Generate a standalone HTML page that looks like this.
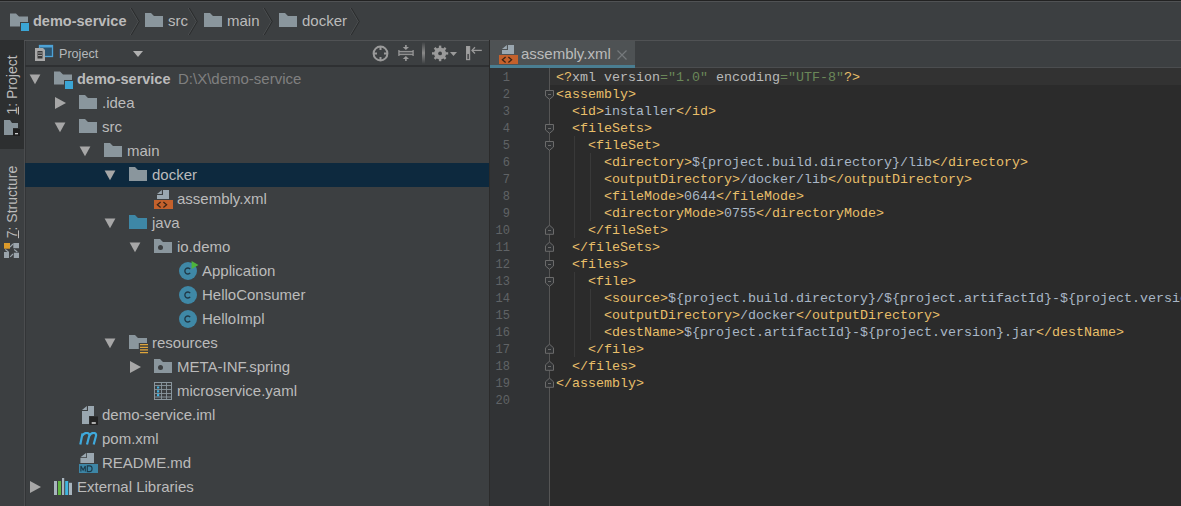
<!DOCTYPE html>
<html><head><meta charset="utf-8">
<style>
html,body{margin:0;padding:0;}
body{width:1181px;height:506px;overflow:hidden;position:relative;background:#3C3F41;font-family:"Liberation Sans",sans-serif;}
.abs{position:absolute;}
.t{position:absolute;height:24px;line-height:24px;font-size:15px;color:#BBBBBB;white-space:pre;}
.t.b{font-weight:bold;font-size:14.5px;}
.t.g{color:#808080;}
.cr{position:absolute;top:2px;height:38px;line-height:38px;font-size:15px;color:#BBBBBB;white-space:pre;}
#code{position:absolute;left:556px;top:69px;font-family:"Liberation Mono",monospace;font-size:13.333px;white-space:pre;}
.cl{height:17px;line-height:17px;}
#nums{position:absolute;left:480px;top:70px;width:30px;font-family:"Liberation Mono",monospace;font-size:12px;color:#606366;text-align:right;}
.nl{height:17px;line-height:17px;}
</style></head><body>
<!-- top line -->
<div class="abs" style="left:0;top:0;width:1181px;height:1px;background:#222222"></div><div class="abs" style="left:0;top:1px;width:1181px;height:1px;background:#505254"></div>
<!-- breadcrumb -->
<svg class="abs" style="left:10px;top:12px" width="20" height="20" viewBox="0 0 20 20"><path d="M0 1.5H6L9 4.5H18V10H10V14.6H0Z" fill="#8A969D"/><rect x="11" y="11" width="8" height="8" fill="#3BA6D6"/></svg>
<div class="cr" style="left:33px;font-weight:bold;font-size:14.5px">demo-service</div>
<svg style="position:absolute;left:130px;top:7px" width="11" height="29" viewBox="0 0 11 29"><path d="M0.3 1L8.3 14.5L0.3 28" stroke="#4C4F51" stroke-width="1" fill="none"/><path d="M1.3 1L9.3 14.5L1.3 28" stroke="#2A2C2D" stroke-width="1" fill="none"/></svg>
<svg class="abs" style="left:145px;top:13px" width="19" height="14" viewBox="0 0 19 14"><path d="M0 0H6L9 3H18V14H0Z" fill="#8A969D"/></svg>
<div class="cr" style="left:168px">src</div>
<svg style="position:absolute;left:188px;top:7px" width="11" height="29" viewBox="0 0 11 29"><path d="M0.3 1L8.3 14.5L0.3 28" stroke="#4C4F51" stroke-width="1" fill="none"/><path d="M1.3 1L9.3 14.5L1.3 28" stroke="#2A2C2D" stroke-width="1" fill="none"/></svg>
<svg class="abs" style="left:204px;top:13px" width="19" height="14" viewBox="0 0 19 14"><path d="M0 0H6L9 3H18V14H0Z" fill="#8A969D"/></svg>
<div class="cr" style="left:227px">main</div>
<svg style="position:absolute;left:263px;top:7px" width="11" height="29" viewBox="0 0 11 29"><path d="M0.3 1L8.3 14.5L0.3 28" stroke="#4C4F51" stroke-width="1" fill="none"/><path d="M1.3 1L9.3 14.5L1.3 28" stroke="#2A2C2D" stroke-width="1" fill="none"/></svg>
<svg class="abs" style="left:279px;top:13px" width="19" height="14" viewBox="0 0 19 14"><path d="M0 0H6L9 3H18V14H0Z" fill="#8A969D"/></svg>
<div class="cr" style="left:302px">docker</div>
<svg style="position:absolute;left:350px;top:7px" width="11" height="29" viewBox="0 0 11 29"><path d="M0.3 1L8.3 14.5L0.3 28" stroke="#4C4F51" stroke-width="1" fill="none"/><path d="M1.3 1L9.3 14.5L1.3 28" stroke="#2A2C2D" stroke-width="1" fill="none"/></svg>


<!-- left stripe -->
<div class="abs" style="left:0;top:40px;width:24px;height:466px;background:#3C3F41"></div>
<div class="abs" style="left:0;top:40px;width:24px;height:109px;background:#2D2F30"></div>
<div class="abs" style="left:24px;top:40px;width:1px;height:466px;background:#4B4D4F"></div><div class="abs" style="left:25px;top:40px;width:1px;height:466px;background:#333537"></div>
<div class="abs" style="left:-28px;top:77px;width:80px;height:16px;line-height:16px;font-size:14px;color:#BBBBBB;transform:rotate(-90deg);text-align:center;white-space:pre"><u>1</u>: Project</div>
<svg class="abs" style="left:4px;top:120px" width="17" height="16" viewBox="0 0 17 16"><path d="M0 0H6L8 3H14V8H9V15H0Z" fill="#87939A"/><rect x="9" y="9" width="7" height="7" fill="#1E1E1E"/><rect x="11" y="13" width="3" height="1.3" fill="#CCC"/></svg>
<div class="abs" style="left:-33px;top:194px;width:90px;height:16px;line-height:16px;font-size:14px;color:#BBBBBB;transform:rotate(-90deg);text-align:center;white-space:pre"><u>7</u>: Structure</div>
<svg class="abs" style="left:4px;top:243px" width="16" height="16" viewBox="0 0 16 16"><rect x="0" y="0" width="6" height="5.7" fill="#DB9A2A"/><rect x="9.3" y="0" width="5.7" height="5.2" fill="#9AA4AB"/><rect x="0" y="9" width="5" height="6" fill="#9AA4AB"/><rect x="9.8" y="9.7" width="5.2" height="5.3" fill="#9AA4AB"/><path d="M6 4L9 1M1.3 6.5L4.5 9M10.2 6.5L13.3 9M6.2 13.8L9 11" stroke="#9AA4AB" stroke-width="1.1"/></svg>

<!-- project panel header -->
<div class="abs" style="left:24px;top:40px;width:465px;height:1px;background:#505254"></div>
<div class="abs" style="left:25px;top:65px;width:464px;height:2px;background:#2E3032"></div>
<svg class="abs" style="left:34px;top:44px" width="20" height="18" viewBox="0 0 20 18"><rect x="5.5" y="1.5" width="13" height="11" fill="#2C5470" stroke="#4DA2D6" stroke-width="1.3"/><rect x="5" y="1" width="14" height="2.5" fill="#4DA2D6"/><path d="M1 4H9L11 6V17H1Z" fill="#A9A9A9"/><rect x="3.5" y="7" width="5" height="7.5" fill="#3A3A3A"/><path d="M4 9H8M4 11.5H8" stroke="#A9A9A9" stroke-width="0.9"/></svg>
<div class="abs" style="left:59px;top:45px;height:18px;line-height:18px;font-size:12.6px;color:#B4B8BB">Project</div>
<svg class="abs" style="left:133px;top:51px" width="10" height="6" viewBox="0 0 10 6"><path d="M0 0H10L5 6Z" fill="#B0B0B0"/></svg>
<svg class="abs" style="left:372px;top:45px" width="17" height="17" viewBox="0 0 17 17"><circle cx="8.5" cy="8.5" r="6.9" fill="none" stroke="#9A9A9A" stroke-width="2"/><path d="M8.5 1.5V5M8.5 12V15.5M1.5 8.5H5M12 8.5H15.5" stroke="#9A9A9A" stroke-width="2"/></svg>
<svg class="abs" style="left:398px;top:45px" width="16" height="17" viewBox="0 0 16 17"><rect x="1" y="6.4" width="14" height="2.8" fill="#5A5C5E"/><path d="M1 6.4H15M1 9.6H15" stroke="#9A9A9A" stroke-width="1"/><path d="M0.9 5V11M15.1 5V11" stroke="#9A9A9A" stroke-width="1.2"/><path d="M7.9 0V3M7.9 13V16" stroke="#9A9A9A" stroke-width="1.6"/><path d="M4.8 2L11 2L7.9 5Z M4.8 14L11 14L7.9 11Z" fill="#9A9A9A"/></svg>
<div class="abs" style="left:422px;top:42px;width:3px;height:22px;background:linear-gradient(#3C3F41,#8A8A8A 50%,#3C3F41)"></div>
<svg class="abs" style="left:432px;top:45px" width="17" height="17" viewBox="0 0 17 17"><g fill="#9A9A9A"><circle cx="8.1" cy="8.4" r="6"/><rect x="6.9" y="0.6" width="2.4" height="15.6"/><rect x="0" y="7.2" width="16.2" height="2.4"/><rect x="6.9" y="0.6" width="2.4" height="15.6" transform="rotate(45 8.1 8.4)"/><rect x="6.9" y="0.6" width="2.4" height="15.6" transform="rotate(-45 8.1 8.4)"/></g><circle cx="8.1" cy="8.4" r="1.9" fill="#3C3F41"/></svg>
<svg class="abs" style="left:450px;top:52px" width="7" height="4" viewBox="0 0 7 4"><path d="M0 0H7L3.5 4Z" fill="#9A9A9A"/></svg>
<svg class="abs" style="left:465px;top:45px" width="18" height="16" viewBox="0 0 18 16"><rect x="1" y="1" width="4.2" height="14.2" fill="#9A9A9A"/><rect x="2.7" y="1.5" width="0.6" height="7" fill="#B0B0B0"/><rect x="2.5" y="9" width="1.2" height="5" fill="#2E3032"/><path d="M7 5.4H16.8" stroke="#9A9A9A" stroke-width="1.3"/><path d="M10 2.3L7 5.4L10 8.5" stroke="#9A9A9A" stroke-width="1.3" fill="none"/></svg>

<!-- tree -->
<svg style="position:absolute;left:29px;top:74px" width="12" height="11" viewBox="0 0 12 11"><path d="M0.6 0.5H11.4L6 10.2Z" fill="#A7A7A7"/></svg>
<svg style="position:absolute;left:54px;top:70px" width="20" height="20" viewBox="0 0 20 20"><path d="M0 1.5H6L9 4.5H18V10H10V14.6H0Z" fill="#8A969D"/><rect x="11" y="11" width="8" height="8" fill="#3BA6D6"/></svg>
<div class="t b" style="left:77px;top:67px">demo-service</div>
<div class="t g" style="left:178px;top:67px">D:\X\demo-service</div>
<svg style="position:absolute;left:55px;top:97px" width="11" height="12" viewBox="0 0 11 12"><path d="M0 0L11 6L0 12Z" fill="#A7A7A7"/></svg>
<svg style="position:absolute;left:79px;top:94px" width="20" height="20" viewBox="0 0 20 20"><path d="M0 1H6L9 4H18V15H0Z" fill="#8A969D"/></svg>
<div class="t" style="left:102px;top:91px">.idea</div>
<svg style="position:absolute;left:54px;top:122px" width="12" height="11" viewBox="0 0 12 11"><path d="M0.6 0.5H11.4L6 10.2Z" fill="#A7A7A7"/></svg>
<svg style="position:absolute;left:79px;top:118px" width="20" height="20" viewBox="0 0 20 20"><path d="M0 1H6L9 4H18V15H0Z" fill="#8A969D"/></svg>
<div class="t" style="left:102px;top:115px">src</div>
<svg style="position:absolute;left:79px;top:146px" width="12" height="11" viewBox="0 0 12 11"><path d="M0.6 0.5H11.4L6 10.2Z" fill="#A7A7A7"/></svg>
<svg style="position:absolute;left:104px;top:142px" width="20" height="20" viewBox="0 0 20 20"><path d="M0 1H6L9 4H18V15H0Z" fill="#8A969D"/></svg>
<div class="t" style="left:127px;top:139px">main</div>
<div style="position:absolute;left:25px;top:163px;width:464px;height:24px;background:#0D293E"></div>
<svg style="position:absolute;left:104px;top:170px" width="12" height="11" viewBox="0 0 12 11"><path d="M0.6 0.5H11.4L6 10.2Z" fill="#A7A7A7"/></svg>
<svg style="position:absolute;left:129px;top:166px" width="20" height="20" viewBox="0 0 20 20"><path d="M0 1H6L9 4H18V15H0Z" fill="#8A969D"/></svg>
<div class="t" style="left:152px;top:163px">docker</div>
<svg style="position:absolute;left:154px;top:190px" width="20" height="20" viewBox="0 0 20 20"><path d="M9 0H15V9H3V5.1H9Z" fill="#9AA7B0"/><path d="M3 4.1L7.9 0V4.1Z" fill="#9AA7B0"/><rect x="0" y="10" width="19" height="9" fill="#C4612C"/><path d="M6.6 12L3.4 14.8L6.6 17.6M9.4 12L12.6 14.8L9.4 17.6" stroke="#3A2517" stroke-width="1.3" fill="none"/></svg>
<div class="t" style="left:177px;top:187px">assembly.xml</div>
<svg style="position:absolute;left:104px;top:218px" width="12" height="11" viewBox="0 0 12 11"><path d="M0.6 0.5H11.4L6 10.2Z" fill="#A7A7A7"/></svg>
<svg style="position:absolute;left:129px;top:214px" width="20" height="20" viewBox="0 0 20 20"><path d="M0 1H6L9 4H18V15H0Z" fill="#3E87A6"/></svg>
<div class="t" style="left:152px;top:211px">java</div>
<svg style="position:absolute;left:129px;top:242px" width="12" height="11" viewBox="0 0 12 11"><path d="M0.6 0.5H11.4L6 10.2Z" fill="#A7A7A7"/></svg>
<svg style="position:absolute;left:154px;top:238px" width="20" height="20" viewBox="0 0 20 20"><path d="M0 1H6L9 4H18V15H0Z" fill="#8A969D"/><circle cx="6.5" cy="9.4" r="2.5" fill="#3C3F41"/></svg>
<div class="t" style="left:177px;top:235px">io.demo</div>
<svg style="position:absolute;left:179px;top:261px" width="20" height="21" viewBox="0 0 20 21"><circle cx="9" cy="10" r="9" fill="#3F88A6"/><path d="M11.2 8.1A3 3 0 1 0 11.2 11.9" stroke="#203846" stroke-width="1.35" fill="none"/><path d="M12.6 0L19.5 4L12.6 8Z" fill="#4DB53C"/></svg>
<div class="t" style="left:202px;top:259px">Application</div>
<svg style="position:absolute;left:179px;top:285px" width="20" height="21" viewBox="0 0 20 21"><circle cx="9" cy="10" r="9" fill="#3F88A6"/><path d="M11.2 8.1A3 3 0 1 0 11.2 11.9" stroke="#203846" stroke-width="1.35" fill="none"/></svg>
<div class="t" style="left:202px;top:283px">HelloConsumer</div>
<svg style="position:absolute;left:179px;top:309px" width="20" height="21" viewBox="0 0 20 21"><circle cx="9" cy="10" r="9" fill="#3F88A6"/><path d="M11.2 8.1A3 3 0 1 0 11.2 11.9" stroke="#203846" stroke-width="1.35" fill="none"/></svg>
<div class="t" style="left:202px;top:307px">HelloImpl</div>
<svg style="position:absolute;left:104px;top:338px" width="12" height="11" viewBox="0 0 12 11"><path d="M0.6 0.5H11.4L6 10.2Z" fill="#A7A7A7"/></svg>
<svg style="position:absolute;left:129px;top:334px" width="20" height="20" viewBox="0 0 20 20"><path d="M0 1H6L9 4H18V9H9.8V15H0Z" fill="#8A969D"/><path d="M11 10.6H19M11 13.4H19M11 15.9H19M11 18.6H19" stroke="#DFA53A" stroke-width="1.4"/></svg>
<div class="t" style="left:152px;top:331px">resources</div>
<svg style="position:absolute;left:130px;top:361px" width="11" height="12" viewBox="0 0 11 12"><path d="M0 0L11 6L0 12Z" fill="#A7A7A7"/></svg>
<svg style="position:absolute;left:154px;top:358px" width="20" height="20" viewBox="0 0 20 20"><path d="M0 1H6L9 4H18V15H0Z" fill="#8A969D"/><circle cx="6.5" cy="9.4" r="2.5" fill="#3C3F41"/></svg>
<div class="t" style="left:177px;top:355px">META-INF.spring</div>
<svg style="position:absolute;left:154px;top:382px" width="20" height="20" viewBox="0 0 20 20"><rect x="0.5" y="0.5" width="17" height="17" fill="none" stroke="#8A969D"/><path d="M0.5 3.5H17.5M7.5 0.5V17.5M12.5 0.5V17.5M0.5 7.5H17.5M0.5 11.5H17.5M0.5 15H17.5" stroke="#8A969D" stroke-width="0.9"/><path d="M3 5.5H5.2M3 9.3H5.2M3 13.1H5.2" stroke="#3FB0E0" stroke-width="2.2"/></svg>
<div class="t" style="left:177px;top:379px">microservice.yaml</div>
<svg style="position:absolute;left:79px;top:406px" width="20" height="20" viewBox="0 0 20 20"><path d="M9 0H15V18H3V5.1H9Z" fill="#9AA7B0"/><path d="M3 4.1L7.9 0V4.1Z" fill="#9AA7B0"/><rect x="10" y="10" width="9.5" height="9.5" fill="#3C3F41"/><rect x="10.5" y="10.5" width="8.5" height="8.5" fill="#232323"/><rect x="12.7" y="16.2" width="4.1" height="1.6" fill="#D0D0D0"/></svg>
<div class="t" style="left:102px;top:403px">demo-service.iml</div>
<svg style="position:absolute;left:79px;top:432px" width="20" height="15" viewBox="0 0 20 15"><path d="M1.3 12.5L3.5 1.5M3.1 4C4.5 1.5 6 0.8 7.8 0.9C10 1.1 10.6 2.5 10.1 4.3L8 12.5M10.1 4.3C11.4 1.6 13 0.8 14.7 0.9C17 1.1 17.4 2.5 16.9 4.3L14.7 12.5" stroke="#3FA9DC" stroke-width="2.2" fill="none"/></svg>
<div class="t" style="left:102px;top:427px">pom.xml</div>
<svg style="position:absolute;left:79px;top:452px" width="20" height="22" viewBox="0 0 20 22"><path d="M7.8 1H15V11H1.4V6H7.8Z" fill="#9AA7B0"/><path d="M1.4 5.3L7 1V5.3Z" fill="#9AA7B0"/><rect x="0" y="12" width="19" height="9" fill="#3D86A6"/><path d="M1.9 19.6V13.9L4.1 18L6.3 13.9V19.6M8.3 13.9V19.6H10.6Q13.1 19.6 13.1 16.75Q13.1 13.9 10.6 13.9Z" stroke="#1C3A4A" stroke-width="1.1" fill="none"/></svg>
<div class="t" style="left:102px;top:451px">README.md</div>
<svg style="position:absolute;left:30px;top:481px" width="11" height="12" viewBox="0 0 11 12"><path d="M0 0L11 6L0 12Z" fill="#A7A7A7"/></svg>
<svg style="position:absolute;left:54px;top:478px" width="20" height="20" viewBox="0 0 20 20"><rect x="0" y="3" width="3" height="14" fill="#A9B5BE"/><rect x="4" y="3" width="3" height="14" fill="#62B543"/><rect x="8" y="0" width="2.2" height="17" fill="#A9B5BE"/><rect x="11.2" y="3" width="3" height="14" fill="#40B6E0"/><rect x="15" y="4.8" width="3" height="12.2" fill="#A9B5BE"/></svg>
<div class="t" style="left:77px;top:475px">External Libraries</div>

<!-- divider -->
<div class="abs" style="left:489px;top:40px;width:1px;height:466px;background:#2B2B2B"></div>

<!-- tabs -->
<div class="abs" style="left:490px;top:40px;width:691px;height:28px;background:#3C3F41"></div>
<div class="abs" style="left:490px;top:40px;width:691px;height:1px;background:#505254"></div>
<div class="abs" style="left:490px;top:41px;width:145px;height:24px;background:#4E5254"></div>
<div class="abs" style="left:490px;top:65px;width:145px;height:3px;background:#4A7E92"></div>
<div class="abs" style="left:635px;top:67px;width:546px;height:1px;background:#4B4D4F"></div>
<svg style="position:absolute;left:499px;top:45px" width="20" height="20" viewBox="0 0 20 20"><path d="M9 0H15V9H3V5.1H9Z" fill="#9AA7B0"/><path d="M3 4.1L7.9 0V4.1Z" fill="#9AA7B0"/><rect x="0" y="10" width="19" height="9" fill="#C4612C"/><path d="M6.6 12L3.4 14.8L6.6 17.6M9.4 12L12.6 14.8L9.4 17.6" stroke="#3A2517" stroke-width="1.3" fill="none"/></svg>
<div class="abs" style="left:521px;top:42px;height:24px;line-height:24px;font-size:15px;color:#BBBBBB">assembly.xml</div>
<svg class="abs" style="left:617px;top:50px" width="10" height="10" viewBox="0 0 10 10"><path d="M0.5 0.5L9.5 9.5M9.5 0.5L0.5 9.5" stroke="#75797C" stroke-width="1.2"/></svg>

<!-- editor -->
<div class="abs" style="left:490px;top:68px;width:60px;height:438px;background:#313335"></div>
<div class="abs" style="left:550px;top:68px;width:631px;height:438px;background:#2B2B2B"></div>
<div class="abs" style="left:550px;top:68px;width:631px;height:17px;background:#323232"></div>
<div class="abs" style="left:549px;top:68px;width:1px;height:438px;background:#555555"></div>
<!-- indent guides -->
<div class="abs" style="left:574px;top:136px;width:1px;height:102px;background:#393939"></div>
<div class="abs" style="left:590px;top:153px;width:1px;height:68px;background:#393939"></div>
<div class="abs" style="left:574px;top:272px;width:1px;height:85px;background:#393939"></div>
<div class="abs" style="left:590px;top:289px;width:1px;height:51px;background:#393939"></div>
<svg style="position:absolute;left:544px;top:89px" width="11" height="12" viewBox="0 0 11 12"><path d="M1.5 1.5H9.5V7L5.5 10.3L1.5 7Z" fill="#313335" stroke="#6B6B6B"/><path d="M4 5.5H7" stroke="#6B6B6B"/></svg>
<svg style="position:absolute;left:544px;top:123px" width="11" height="12" viewBox="0 0 11 12"><path d="M1.5 1.5H9.5V7L5.5 10.3L1.5 7Z" fill="#313335" stroke="#6B6B6B"/><path d="M4 5.5H7" stroke="#6B6B6B"/></svg>
<svg style="position:absolute;left:544px;top:140px" width="11" height="12" viewBox="0 0 11 12"><path d="M1.5 1.5H9.5V7L5.5 10.3L1.5 7Z" fill="#313335" stroke="#6B6B6B"/><path d="M4 5.5H7" stroke="#6B6B6B"/></svg>
<svg style="position:absolute;left:544px;top:259px" width="11" height="12" viewBox="0 0 11 12"><path d="M1.5 1.5H9.5V7L5.5 10.3L1.5 7Z" fill="#313335" stroke="#6B6B6B"/><path d="M4 5.5H7" stroke="#6B6B6B"/></svg>
<svg style="position:absolute;left:544px;top:276px" width="11" height="12" viewBox="0 0 11 12"><path d="M1.5 1.5H9.5V7L5.5 10.3L1.5 7Z" fill="#313335" stroke="#6B6B6B"/><path d="M4 5.5H7" stroke="#6B6B6B"/></svg>
<svg style="position:absolute;left:544px;top:224px" width="11" height="12" viewBox="0 0 11 12"><path d="M1.5 10.3H9.5V4.8L5.5 1.2L1.5 4.8Z" fill="#313335" stroke="#6B6B6B"/><path d="M4 6.5H7" stroke="#6B6B6B"/></svg>
<svg style="position:absolute;left:544px;top:241px" width="11" height="12" viewBox="0 0 11 12"><path d="M1.5 10.3H9.5V4.8L5.5 1.2L1.5 4.8Z" fill="#313335" stroke="#6B6B6B"/><path d="M4 6.5H7" stroke="#6B6B6B"/></svg>
<svg style="position:absolute;left:544px;top:343px" width="11" height="12" viewBox="0 0 11 12"><path d="M1.5 10.3H9.5V4.8L5.5 1.2L1.5 4.8Z" fill="#313335" stroke="#6B6B6B"/><path d="M4 6.5H7" stroke="#6B6B6B"/></svg>
<svg style="position:absolute;left:544px;top:360px" width="11" height="12" viewBox="0 0 11 12"><path d="M1.5 10.3H9.5V4.8L5.5 1.2L1.5 4.8Z" fill="#313335" stroke="#6B6B6B"/><path d="M4 6.5H7" stroke="#6B6B6B"/></svg>
<svg style="position:absolute;left:544px;top:377px" width="11" height="12" viewBox="0 0 11 12"><path d="M1.5 10.3H9.5V4.8L5.5 1.2L1.5 4.8Z" fill="#313335" stroke="#6B6B6B"/><path d="M4 6.5H7" stroke="#6B6B6B"/></svg>
<div id="nums"><div class="nl">1</div><div class="nl">2</div><div class="nl">3</div><div class="nl">4</div><div class="nl">5</div><div class="nl">6</div><div class="nl">7</div><div class="nl">8</div><div class="nl">9</div><div class="nl">10</div><div class="nl">11</div><div class="nl">12</div><div class="nl">13</div><div class="nl">14</div><div class="nl">15</div><div class="nl">16</div><div class="nl">17</div><div class="nl">18</div><div class="nl">19</div><div class="nl">20</div></div>
<div id="code"><div class="cl"><span style="color:#E8BF6A">&lt;?</span><span style="color:#BABABA">xml version</span><span style="color:#6A8759">="1.0"</span><span style="color:#BABABA"> encoding</span><span style="color:#6A8759">="UTF-8"</span><span style="color:#E8BF6A">?&gt;</span></div><div class="cl"><span style="color:#E8BF6A">&lt;assembly&gt;</span></div><div class="cl">  <span style="color:#E8BF6A">&lt;id&gt;</span><span style="color:#A9B7C6">installer</span><span style="color:#E8BF6A">&lt;/id&gt;</span></div><div class="cl">  <span style="color:#E8BF6A">&lt;fileSets&gt;</span></div><div class="cl">    <span style="color:#E8BF6A">&lt;fileSet&gt;</span></div><div class="cl">      <span style="color:#E8BF6A">&lt;directory&gt;</span><span style="color:#A9B7C6">${project.build.directory}/lib</span><span style="color:#E8BF6A">&lt;/directory&gt;</span></div><div class="cl">      <span style="color:#E8BF6A">&lt;outputDirectory&gt;</span><span style="color:#A9B7C6">/docker/lib</span><span style="color:#E8BF6A">&lt;/outputDirectory&gt;</span></div><div class="cl">      <span style="color:#E8BF6A">&lt;fileMode&gt;</span><span style="color:#A9B7C6">0644</span><span style="color:#E8BF6A">&lt;/fileMode&gt;</span></div><div class="cl">      <span style="color:#E8BF6A">&lt;directoryMode&gt;</span><span style="color:#A9B7C6">0755</span><span style="color:#E8BF6A">&lt;/directoryMode&gt;</span></div><div class="cl">    <span style="color:#E8BF6A">&lt;/fileSet&gt;</span></div><div class="cl">  <span style="color:#E8BF6A">&lt;/fileSets&gt;</span></div><div class="cl">  <span style="color:#E8BF6A">&lt;files&gt;</span></div><div class="cl">    <span style="color:#E8BF6A">&lt;file&gt;</span></div><div class="cl">      <span style="color:#E8BF6A">&lt;source&gt;</span><span style="color:#A9B7C6">${project.build.directory}/${project.artifactId}-${project.version}.jar</span><span style="color:#E8BF6A">&lt;/source&gt;</span></div><div class="cl">      <span style="color:#E8BF6A">&lt;outputDirectory&gt;</span><span style="color:#A9B7C6">/docker</span><span style="color:#E8BF6A">&lt;/outputDirectory&gt;</span></div><div class="cl">      <span style="color:#E8BF6A">&lt;destName&gt;</span><span style="color:#A9B7C6">${project.artifactId}-${project.version}.jar</span><span style="color:#E8BF6A">&lt;/destName&gt;</span></div><div class="cl">    <span style="color:#E8BF6A">&lt;/file&gt;</span></div><div class="cl">  <span style="color:#E8BF6A">&lt;/files&gt;</span></div><div class="cl"><span style="color:#E8BF6A">&lt;/assembly&gt;</span></div><div class="cl"></div></div>
</body></html>
